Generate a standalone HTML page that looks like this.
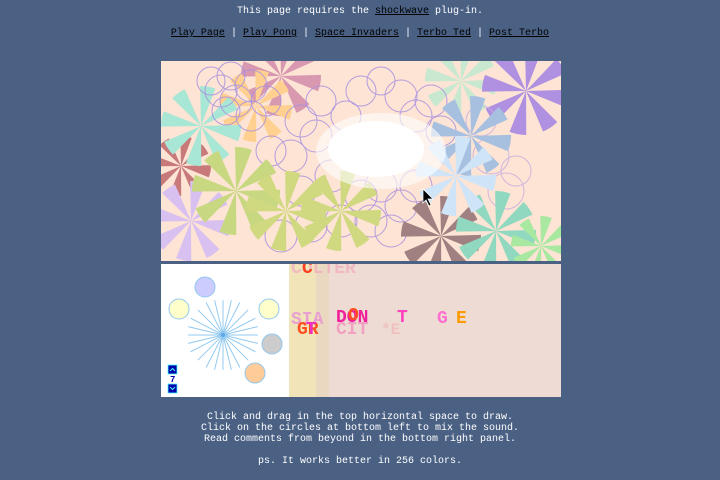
<!DOCTYPE html>
<html><head><meta charset="utf-8"><style>
body{margin:0;width:720px;height:480px;background:#4a6184;color:#fff;font-family:"Liberation Mono",monospace;font-size:10px;overflow:hidden;position:relative}
a{color:#000;text-decoration:underline}
.c{position:absolute;left:0;width:720px;text-align:center;white-space:pre}
</style></head><body>
<div class="c" style="top:6px">This page requires the <a>shockwave</a> plug-in.</div>
<div class="c" style="top:28px"><a>Play Page</a> | <a>Play Pong</a> | <a>Space Invaders</a> | <a>Terbo Ted</a> | <a>Post Terbo</a></div>
<svg style="position:absolute;left:161px;top:61px" width="400" height="200" viewBox="0 0 400 200">
<rect width="400" height="200" fill="#fde4d4"/>
<g fill="none" stroke-dasharray="1 1">
<circle cx="120" cy="15" r="20" stroke-width="40" stroke="#d898b0" pathLength="16"/>
<circle cx="95" cy="45" r="18" stroke-width="36" stroke="#ffd090" pathLength="16"/>
<circle cx="300" cy="20" r="18" stroke-width="36" stroke="#c8e8d0" pathLength="16"/>
<circle cx="365" cy="30" r="22" stroke-width="44" stroke="#b090e0" pathLength="16"/>
<circle cx="20" cy="105" r="15" stroke-width="30" stroke="#c87a7a" pathLength="16"/>
<circle cx="40" cy="65" r="20" stroke-width="40" stroke="#a8e6d6" pathLength="16"/>
</g>
<g fill="none" stroke="#a890e0" stroke-width="1" opacity=".85">
<circle cx="60" cy="30" r="16"/><circle cx="75" cy="40" r="16"/><circle cx="90" cy="25" r="16"/><circle cx="70" cy="15" r="14"/><circle cx="90" cy="55" r="15"/><circle cx="50" cy="20" r="14"/><circle cx="105" cy="40" r="15"/><circle cx="65" cy="50" r="14"/>
<circle cx="140" cy="60" r="16"/><circle cx="155" cy="75" r="16"/><circle cx="130" cy="95" r="16"/><circle cx="170" cy="115" r="16"/><circle cx="200" cy="135" r="16"/><circle cx="220" cy="125" r="16"/><circle cx="240" cy="145" r="16"/><circle cx="255" cy="55" r="16"/><circle cx="240" cy="35" r="16"/><circle cx="270" cy="40" r="16"/><circle cx="110" cy="90" r="15"/><circle cx="150" cy="165" r="16"/><circle cx="120" cy="175" r="16"/><circle cx="255" cy="125" r="16"/><circle cx="330" cy="95" r="18" stroke="#c8b0e0"/><circle cx="345" cy="130" r="18" stroke="#c8b0e0"/><circle cx="200" cy="30" r="15"/><circle cx="230" cy="170" r="16"/><circle cx="160" cy="40" r="15"/><circle cx="185" cy="55" r="15"/><circle cx="220" cy="20" r="14"/><circle cx="280" cy="70" r="15"/><circle cx="180" cy="160" r="16"/><circle cx="210" cy="160" r="16"/><circle cx="140" cy="130" r="15"/><circle cx="320" cy="60" r="15" stroke="#c8b0e0"/><circle cx="355" cy="110" r="15" stroke="#c8b0e0"/>
</g>
<g fill="none" stroke-dasharray="1 1">
<circle cx="30" cy="160" r="20" stroke-width="40" stroke="#d8c0f0" pathLength="16"/>
<circle cx="75" cy="130" r="22" stroke-width="44" stroke="#c8d880" pathLength="16"/>
<circle cx="125" cy="150" r="20" stroke-width="40" stroke="#d0d880" pathLength="16"/>
<circle cx="180" cy="150" r="20" stroke-width="40" stroke="#d0d880" pathLength="16"/>
<circle cx="310" cy="75" r="20" stroke-width="40" stroke="#a8c0e0" pathLength="16"/>
<circle cx="280" cy="175" r="20" stroke-width="40" stroke="#a08080" pathLength="16"/>
<circle cx="335" cy="170" r="20" stroke-width="40" stroke="#90d8c0" pathLength="16"/>
<circle cx="380" cy="185" r="15" stroke-width="30" stroke="#a8e8a0" pathLength="16"/>
<circle cx="295" cy="115" r="20" stroke-width="40" stroke="#d0e4f8" pathLength="16"/>
</g>
<ellipse cx="220" cy="90" rx="65" ry="38" fill="#fff" opacity=".6"/>
<ellipse cx="215" cy="88" rx="48" ry="28" fill="#fff"/>
<path d="M262 128 v14 l3-3 3 6 2-1-3-6 h5z" fill="#000" stroke="#fff" stroke-width=".7"/>
</svg>
<svg style="position:absolute;left:161px;top:264px" width="400" height="133" viewBox="0 0 400 133" font-family="Liberation Mono,monospace" font-weight="bold">
<rect width="400" height="133" fill="#eedcd4"/>
<rect width="128" height="133" fill="#fff"/>
<rect x="128" width="40" height="133" fill="#f0e4b8"/>
<rect x="155" width="13" height="133" fill="#ead8c0"/>
<g stroke="#90c8f0" stroke-width="0.8" transform="translate(0,12) translate(62,59) scale(1.2) translate(-62,-59)"><path d="M62 30v58M33 59h58M41 38l42 42M41 80l42-42M48 32l28 54M48 86l28-54M35 45l54 28M35 73l54-28M55 30l14 58M55 88l14-58M33 52l58 14M33 66l58-14"/></g>
<circle cx="62" cy="71" r="2" fill="#60a8e8"/>
<g stroke="#90c8f0" stroke-width="1"><circle cx="44" cy="23" r="10" fill="#ccccff"/><circle cx="18" cy="45" r="10" fill="#ffffcc"/><circle cx="108" cy="45" r="10" fill="#ffffcc"/><circle cx="111" cy="80" r="10" fill="#cccccc"/><circle cx="94" cy="109" r="10" fill="#ffcc99"/></g>
<rect x="7" y="101" width="9" height="9" fill="#0000aa" stroke="#4ff" stroke-width=".8"/><rect x="7" y="120" width="9" height="9" fill="#0000aa" stroke="#4ff" stroke-width=".8"/>
<path d="M9 107l2.5-2.5 2.5 2.5M9 123l2.5 2.5 2.5-2.5" stroke="#4ff" fill="none"/>
<text x="9" y="118" font-size="9" fill="#00a">7</text>
<text x="130" y="9" font-size="18" fill="#f0b0c0" opacity=".8">COLTER</text>
<text x="141" y="9" font-size="18" fill="#ff4020">C</text>
<text x="130" y="60" font-size="18" fill="#e8a0d0">SIA</text>
<text x="175" y="58" font-size="18" fill="#f0209a">DON</text><text x="187" y="56" font-size="18" fill="#ff5020">O</text><text x="236" y="58" font-size="18" fill="#ff40c0">T</text>
<text x="276" y="59" font-size="18" fill="#ff70d0">G</text><text x="295" y="59" font-size="18" fill="#ff9900">E</text>
<text x="136" y="70" font-size="18" fill="#ff5020">GR</text><text x="145" y="70" font-size="18" fill="#f030c0">T</text><text x="175" y="70" font-size="18" fill="#f0a0c0">CIT</text><text x="220" y="70" font-size="16" fill="#f0c0c0">*E</text>
</svg>
<div class="c" style="top:412px;line-height:11px">Click and drag in the top horizontal space to draw.
Click on the circles at bottom left to mix the sound.
Read comments from beyond in the bottom right panel.

ps. It works better in 256 colors.</div>
</body></html>
